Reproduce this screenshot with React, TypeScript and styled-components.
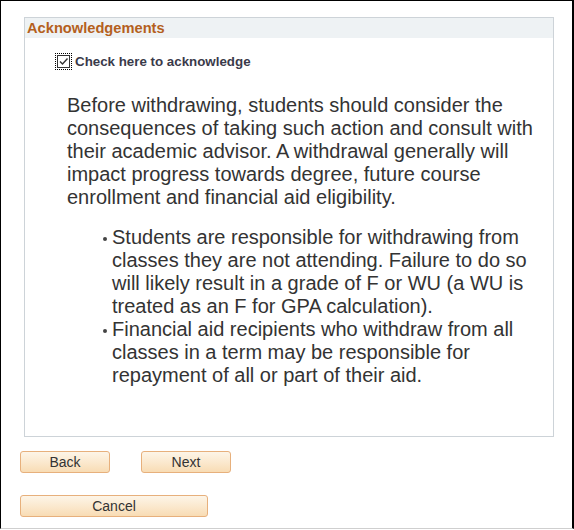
import React from 'react';
import styled, { createGlobalStyle } from 'styled-components';

const GlobalStyle = createGlobalStyle`
  html, body {
    margin: 0;
    padding: 0;
    background: #ffffff;
  }
  body {
    font-family: "Liberation Sans", Arial, sans-serif;
  }
`;

const Frame = styled.div`
  box-sizing: border-box;
  width: 574px;
  height: 529px;
  border-top: 1px solid #000;
  border-left: 1px solid #000;
  border-right: 2px solid #000;
  border-bottom: 1px solid #cfcfcf;
  padding: 16px 0 0 23px;
  display: flex;
  flex-direction: column;
`;

const GroupBox = styled.section`
  box-sizing: border-box;
  width: 530px;
  height: 420px;
  border: 1px solid #cdd3d8;
  display: flex;
  flex-direction: column;
`;

const GroupHeader = styled.h2`
  margin: 0;
  height: 20px;
  line-height: 20px;
  padding-left: 2px;
  background: #eef2f4;
  color: #b4601d;
  font-size: 14.67px;
  font-weight: bold;
`;

const CheckRow = styled.label`
  display: flex;
  align-items: center;
  gap: 4px;
  margin: 16px 0 0 31px;
  color: #3a3a4a;
  font-size: 13.33px;
  font-weight: bold;
`;

const CheckBox = styled.span`
  display: inline-flex;
  width: 15px;
  height: 15px;
  box-sizing: border-box;
  outline: 1px dotted #000;
  align-items: center;
  justify-content: center;
`;

const Body = styled.div`
  margin: 25px 6px 0 42px;
  color: #333333;
  font-size: 20px;
  line-height: 23px;
`;

const Para = styled.p`
  margin: 0 0 17px 0;
`;

const List = styled.ul`
  margin: 0;
  padding-left: 45px;
  list-style: none;
`;

const Item = styled.li`
  position: relative;
  &::before {
    content: '';
    position: absolute;
    left: -9px;
    top: 11px;
    width: 4px;
    height: 4px;
    border-radius: 50%;
    background: #444;
  }
`;

const ButtonRow = styled.div`
  display: flex;
  gap: 31px;
  margin: 14px 0 0 -4px;
`;

const Button = styled.button<{ $width: number }>`
  box-sizing: border-box;
  width: ${p => p.$width}px;
  height: 22px;
  padding: 0;
  border: 1px solid #e7b07c;
  border-radius: 3px;
  background: linear-gradient(to bottom, #fdf5e8 0%, #fbe9cf 50%, #f8dcb4 100%);
  color: #333333;
  font-family: "Liberation Sans", Arial, sans-serif;
  font-size: 14px;
  line-height: 20px;
  text-align: center;
`;

const CancelRow = styled.div`
  display: flex;
  margin: 22px 0 0 -4px;
`;

export default function App() {
  return (
    <>
      <GlobalStyle />
      <Frame>
        <GroupBox>
          <GroupHeader>Acknowledgements</GroupHeader>
          <CheckRow>
            <CheckBox>
              <svg width="13" height="13" viewBox="0 0 13 13">
                <rect x="0.5" y="0.5" width="12" height="12" fill="#fff" stroke="#333" />
                <path d="M3 6.5 L5.5 9 L10.5 3.5" fill="none" stroke="#333" strokeWidth="1.4" />
              </svg>
            </CheckBox>
            Check here to acknowledge
          </CheckRow>
          <Body>
            <Para>
              Before withdrawing, students should consider the consequences of taking such action and
              consult with their academic advisor. A withdrawal generally will impact progress towards
              degree, future course enrollment and financial aid eligibility.
            </Para>
            <List>
              <Item>
                Students are responsible for withdrawing from classes they are not attending. Failure to
                do so will likely result in a grade of F or WU (a WU is treated as an F for GPA
                calculation).
              </Item>
              <Item>
                Financial aid recipients who withdraw from all classes in a term may be responsible for
                repayment of all or part of their aid.
              </Item>
            </List>
          </Body>
        </GroupBox>
        <ButtonRow>
          <Button $width={90}>Back</Button>
          <Button $width={90}>Next</Button>
        </ButtonRow>
        <CancelRow>
          <Button $width={188}>Cancel</Button>
        </CancelRow>
      </Frame>
    </>
  );
}
